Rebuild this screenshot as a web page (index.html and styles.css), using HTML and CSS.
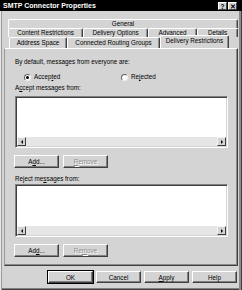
FILE: index.html
```html
<!DOCTYPE html>
<html>
<head>
<meta charset="utf-8">
<link rel="stylesheet" href="styles.css">
</head>
<body>
<div class="window">
  <div class="titlebar">
    <span class="title">SMTP Connector Properties</span>
    <div class="tbtns"><span class="tb">?</span><span class="tb">&#x2715;</span></div>
  </div>
  <div class="client">
    <div class="tabs">
      <div class="row r1"><div class="tab t-general">General</div></div>
      <div class="row r2">
        <div class="tab t-content">Content Restrictions</div>
        <div class="tab t-options">Delivery Options</div>
        <div class="tab t-adv">Advanced</div>
        <div class="tab t-details">Details</div>
      </div>
      <div class="row r3">
        <div class="tab t-addr">Address Space</div>
        <div class="tab t-crg">Connected Routing Groups</div>
        <div class="tab t-restr selected">Delivery Restrictions</div>
      </div>
    </div>
    <div class="panel">
      <div class="label l1">By default, messages from everyone are:</div>
      <div class="radios">
        <div class="radio r-acc"><span class="circle on"></span><span>Accep<u>t</u>ed</span></div>
        <div class="radio r-rej"><span class="circle"></span><span>Re<u>j</u>ected</span></div>
      </div>
      <div class="label l2">A<u>c</u>cept messages from:</div>
      <div class="list">
        <div class="list-body"></div>
        <div class="hscroll">
          <span class="sbtn"><span class="arr left"></span></span>
          <span class="track"></span>
          <span class="sbtn"><span class="arr right"></span></span>
        </div>
      </div>
      <div class="brow">
        <button class="btn">A<u>d</u>d...</button>
        <button class="btn disabled"><u>R</u>emove</button>
      </div>
      <div class="label l3">Reject me<u>s</u>sages from:</div>
      <div class="list list2">
        <div class="list-body"></div>
        <div class="hscroll">
          <span class="sbtn"><span class="arr left"></span></span>
          <span class="track"></span>
          <span class="sbtn"><span class="arr right"></span></span>
        </div>
      </div>
      <div class="brow">
        <button class="btn">Ad<u>d</u>...</button>
        <button class="btn disabled">Re<u>m</u>ove</button>
      </div>
    </div>
    <div class="footer">
      <button class="btn fbtn default">OK</button>
      <button class="btn fbtn">Cancel</button>
      <button class="btn fbtn"><u>A</u>pply</button>
      <button class="btn fbtn">Help</button>
    </div>
  </div>
</div>
</body>
</html>
```
FILE: styles.css
```css
html, body {
  margin: 0;
  padding: 0;
}
body {
  width: 242px;
  height: 290px;
  overflow: hidden;
  font-family: "Liberation Sans", Arial, sans-serif;
  font-size: 6.3px;
  color: #000;
  background: #d4d4d4;
}
.window {
  width: 242px;
  height: 290px;
  display: flex;
  flex-direction: column;
  background: #d4d4d4;
}
.titlebar {
  height: 11px;
  flex: none;
  background: #000;
  color: #fff;
  display: flex;
  align-items: center;
  justify-content: space-between;
  padding: 0 5px 0 3px;
}
.title {
  font-weight: bold;
  font-size: 7px;
  line-height: 11px;
}
.tbtns {
  display: flex;
  gap: 1px;
}
.tb {
  width: 9px;
  height: 8px;
  box-sizing: border-box;
  background: #d4d4d4;
  color: #000;
  font-weight: bold;
  font-size: 6.5px;
  line-height: 7px;
  text-align: center;
  border-top: 1px solid #fff;
  border-left: 1px solid #fff;
  border-right: 1px solid #404040;
  border-bottom: 1px solid #404040;
}
.client {
  flex: 1;
  display: flex;
  flex-direction: column;
  padding: 8px 4px 0 4px;
  box-shadow: inset 1px 0 #e8e8e8, inset 2px 0 #9a9a9a, inset -1px 0 #404040, inset -3px 0 #8a8a8a, inset 0 -1px #404040, inset 0 -2px #808080;
}
.tabs {
  display: flex;
  flex-direction: column;
}
.row {
  display: flex;
}
.r1, .r2 {
  height: 9px;
  margin-left: 4px;
  width: 230px;
}
.r3 {
  height: 11px;
  margin-left: 5px;
}
.tab {
  box-sizing: border-box;
  border-top: 1px solid #fff;
  border-left: 1px solid #fff;
  border-right: 1px solid #404040;
  box-shadow: inset -1px 0 #909090;
  border-radius: 2px 2px 0 0;
  text-align: center;
  white-space: nowrap;
  line-height: 8px;
  background: #d4d4d4;
}
.t-general { width: 230px; }
.t-content { width: 75px; }
.t-options { width: 65px; }
.t-adv { width: 49px; }
.t-details { width: 41px; }
.t-addr { width: 58px; line-height: 10px; }
.t-crg { width: 93px; line-height: 10px; }
.t-restr { width: 69px; }
.tab.selected {
  position: relative;
  z-index: 1;
  height: 13px;
  margin-top: -2px;
  margin-bottom: -1px;
  line-height: 9px;
}
.panel {
  height: 218px;
  flex: none;
  box-sizing: border-box;
  border-top: 1px solid #fff;
  border-left: 1px solid #9a9a9a;
  border-right: 1px solid #404040;
  border-bottom: 1px solid #404040;
  box-shadow: inset -1px 0 #8a8a8a, inset 0 -1px #8a8a8a;
  display: flex;
  flex-direction: column;
  padding-left: 10px;
}
.label {
  line-height: 8px;
  height: 8px;
  white-space: nowrap;
}
.l1 { margin-top: 9px; }
.radios {
  margin-top: 7px;
  height: 8px;
  display: flex;
  align-items: center;
  padding-left: 9px;
}
.radio {
  display: flex;
  align-items: center;
  gap: 3px;
  line-height: 8px;
}
.r-acc { width: 97px; }
.circle {
  width: 7px;
  height: 7px;
  box-sizing: border-box;
  border-radius: 50%;
  background: #fff;
  border: 1px solid;
  border-color: #606060 #f0f0f0 #f0f0f0 #606060;
  display: flex;
  align-items: center;
  justify-content: center;
}
.circle.on::after {
  content: "";
  width: 3px;
  height: 3px;
  border-radius: 50%;
  background: #000;
}
.l2 { margin-top: 3px; }
.list {
  margin-top: 4px;
  width: 213px;
  height: 52px;
  box-sizing: border-box;
  background: #fff;
  border-top: 1px solid #808080;
  border-left: 1px solid #808080;
  border-right: 1px solid #fff;
  border-bottom: 1px solid #fff;
  box-shadow: inset 1px 1px #404040, inset -1px -1px #d4d4d4;
  display: flex;
  flex-direction: column;
  padding: 1px;
}
.list2 {
  margin-top: 1px;
  height: 53px;
}
.list-body {
  flex: 1;
}
.hscroll {
  height: 9px;
  display: flex;
}
.sbtn {
  width: 9px;
  height: 9px;
  box-sizing: border-box;
  background: #d4d4d4;
  border-top: 1px solid #f4f4f4;
  border-left: 1px solid #f4f4f4;
  border-right: 1px solid #404040;
  border-bottom: 1px solid #404040;
  display: flex;
  align-items: center;
  justify-content: center;
}
.track {
  flex: 1;
  background: #e6e6e6;
}
.arr {
  width: 0;
  height: 0;
  border-top: 2px solid transparent;
  border-bottom: 2px solid transparent;
}
.arr.left { border-right: 2px solid #000; }
.arr.right { border-left: 2px solid #000; }
.brow {
  margin-top: 7px;
  margin-left: -1px;
  display: flex;
  gap: 4px;
}
.btn {
  width: 45px;
  height: 13px;
  box-sizing: border-box;
  padding: 0;
  margin: 0;
  font-family: "Liberation Sans", Arial, sans-serif;
  font-size: 6.3px;
  color: #000;
  background: #d4d4d4;
  border-top: 1px solid #fff;
  border-left: 1px solid #fff;
  border-right: 1px solid #404040;
  border-bottom: 1px solid #404040;
  box-shadow: inset -1px -1px #808080;
  line-height: 10px;
  text-align: center;
}
.btn.disabled {
  color: #8c8c8c;
  text-shadow: 1px 1px #fff;
}
.l3 { margin-top: 7px; }
.footer {
  display: flex;
  justify-content: flex-end;
  gap: 3px;
  padding-top: 5px;
  padding-right: 1px;
}
.fbtn {
  height: 12px;
  line-height: 9px;
}
.fbtn.default {
  outline: 1px solid #000;
  outline-offset: 0;
}
```
